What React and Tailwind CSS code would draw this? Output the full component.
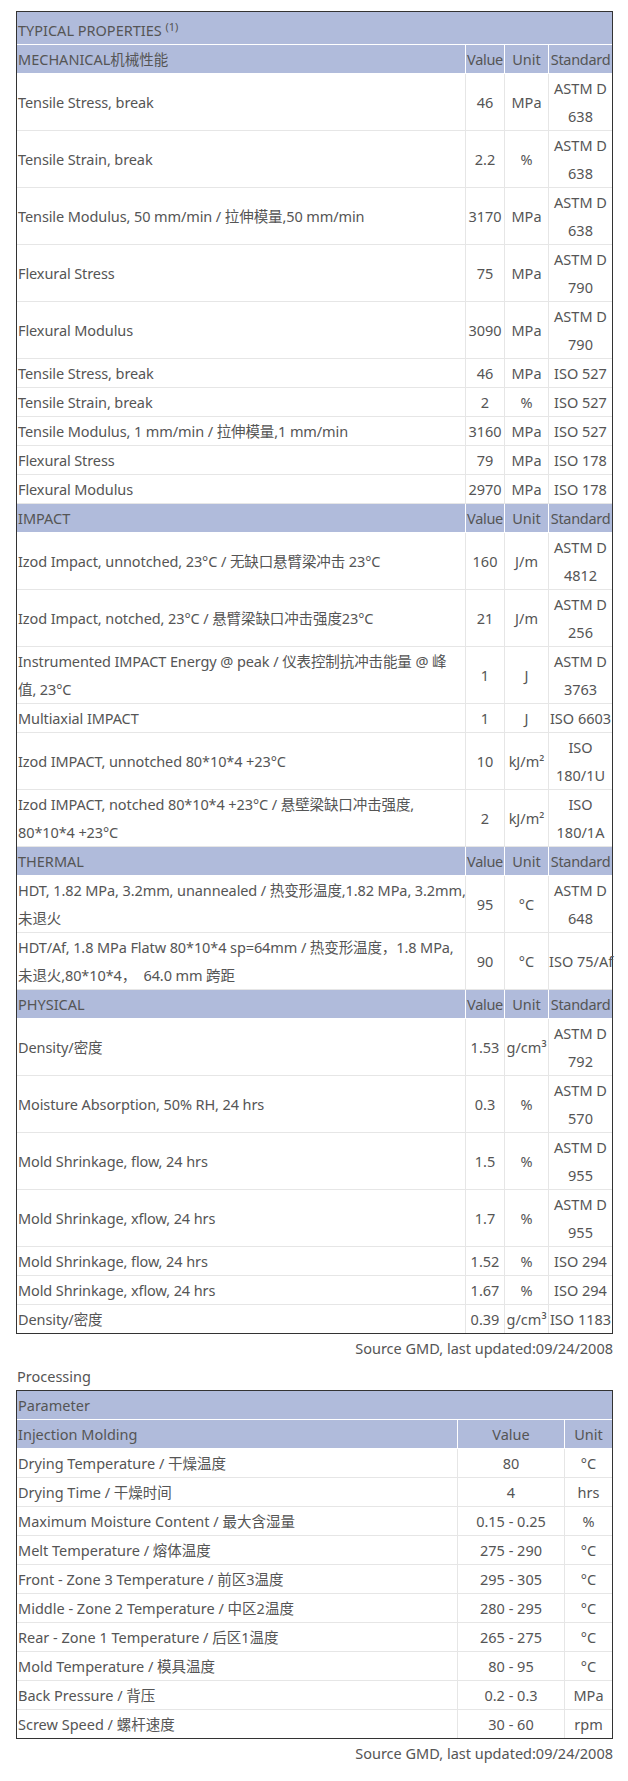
import React from "react";

const FONT = {
    fontFamily: '"Noto Sans", "Noto Sans CJK SC", sans-serif',
};

// [property lines, value, unit, standard lines]
const secciones = [
    {
        titulo: "MECHANICAL机械性能",
        filas: [
            [["Tensile Stress, break"], "46", "MPa", ["ASTM D", "638"]],
            [["Tensile Strain, break"], "2.2", "%", ["ASTM D", "638"]],
            [["Tensile Modulus, 50 mm/min / 拉伸模量,50 mm/min"], "3170", "MPa", ["ASTM D", "638"]],
            [["Flexural Stress"], "75", "MPa", ["ASTM D", "790"]],
            [["Flexural Modulus"], "3090", "MPa", ["ASTM D", "790"]],
            [["Tensile Stress, break"], "46", "MPa", ["ISO 527"]],
            [["Tensile Strain, break"], "2", "%", ["ISO 527"]],
            [["Tensile Modulus, 1 mm/min / 拉伸模量,1 mm/min"], "3160", "MPa", ["ISO 527"]],
            [["Flexural Stress"], "79", "MPa", ["ISO 178"]],
            [["Flexural Modulus"], "2970", "MPa", ["ISO 178"]],
        ],
    },
    {
        titulo: "IMPACT",
        filas: [
            [["Izod Impact, unnotched, 23°C / 无缺口悬臂梁冲击 23°C"], "160", "J/m", ["ASTM D", "4812"]],
            [["Izod Impact, notched, 23°C / 悬臂梁缺口冲击强度23°C"], "21", "J/m", ["ASTM D", "256"]],
            [["Instrumented IMPACT Energy @ peak / 仪表控制抗冲击能量 @ 峰", "值, 23°C"], "1", "J", ["ASTM D", "3763"]],
            [["Multiaxial IMPACT"], "1", "J", ["ISO 6603"]],
            [["Izod IMPACT, unnotched 80*10*4 +23°C"], "10", "kJ/m²", ["ISO", "180/1U"]],
            [["Izod IMPACT, notched 80*10*4 +23°C / 悬壁梁缺口冲击强度,", "80*10*4 +23°C"], "2", "kJ/m²", ["ISO", "180/1A"]],
        ],
    },
    {
        titulo: "THERMAL",
        filas: [
            [["HDT, 1.82 MPa, 3.2mm, unannealed / 热变形温度,1.82 MPa, 3.2mm,", "未退火"], "95", "°C", ["ASTM D", "648"]],
            [["HDT/Af, 1.8 MPa Flatw 80*10*4 sp=64mm / 热变形温度，1.8 MPa,", "未退火,80*10*4，  64.0 mm 跨距"], "90", "°C", ["ISO 75/Af"]],
        ],
    },
    {
        titulo: "PHYSICAL",
        filas: [
            [["Density/密度"], "1.53", "g/cm³", ["ASTM D", "792"]],
            [["Moisture Absorption, 50% RH, 24 hrs"], "0.3", "%", ["ASTM D", "570"]],
            [["Mold Shrinkage, flow, 24 hrs"], "1.5", "%", ["ASTM D", "955"]],
            [["Mold Shrinkage, xflow, 24 hrs"], "1.7", "%", ["ASTM D", "955"]],
            [["Mold Shrinkage, flow, 24 hrs"], "1.52", "%", ["ISO 294"]],
            [["Mold Shrinkage, xflow, 24 hrs"], "1.67", "%", ["ISO 294"]],
            [["Density/密度"], "0.39", "g/cm³", ["ISO 1183"]],
        ],
    },
];

const procesado = [
    ["Drying Temperature / 干燥温度", "80", "°C"],
    ["Drying Time / 干燥时间", "4", "hrs"],
    ["Maximum Moisture Content / 最大含湿量", "0.15 - 0.25", "%"],
    ["Melt Temperature / 熔体温度", "275 - 290", "°C"],
    ["Front - Zone 3 Temperature / 前区3温度", "295 - 305", "°C"],
    ["Middle - Zone 2 Temperature / 中区2温度", "280 - 295", "°C"],
    ["Rear - Zone 1 Temperature / 后区1温度", "265 - 275", "°C"],
    ["Mold Temperature / 模具温度", "80 - 95", "°C"],
    ["Back Pressure / 背压", "0.2 - 0.3", "MPa"],
    ["Screw Speed / 螺杆速度", "30 - 60", "rpm"],
];

const Lineas = ({ lineas }) =>
    lineas.map((l, i) => (
        <div key={i} className="whitespace-pre">
            {l}
        </div>
    ));

const App = () => {
    const total = secciones.reduce((n, s) => n + s.filas.length, 0);
    let idx = 0;

    return (
        <div style={FONT} className="bg-white min-h-screen pt-[11px] pl-4 pr-[15px] text-[14.5px] leading-[28px] text-[#555]">
            <div className="border border-[#333]">
                <div className="bg-[#b0bbdb] border-b border-white pl-px pt-[4px]">
                    TYPICAL PROPERTIES <sup className="text-[11px]">(1)</sup>
                </div>
                {secciones.map((sec) => (
                    <div key={sec.titulo}>
                        <div className="grid grid-cols-[448px_39px_44px_64px] bg-[#b0bbdb] border-b border-white">
                            <div className="pl-px whitespace-nowrap">{sec.titulo}</div>
                            <div className="border-l border-white text-center whitespace-nowrap tracking-[-0.3px]">Value</div>
                            <div className="border-l border-white text-center">Unit</div>
                            <div className="border-l border-white text-center whitespace-nowrap tracking-[-0.3px]">Standard</div>
                        </div>
                        {sec.filas.map(([prop, val, unit, std], i) => {
                            idx++;
                            const ultima = idx === total;
                            return (
                                <div
                                    key={i}
                                    className={
                                        "grid grid-cols-[448px_39px_44px_64px] " +
                                        (ultima ? "" : "border-b border-[#e6e6e6]")
                                    }
                                >
                                    <div className="pl-px flex flex-col justify-center tracking-[-0.1px]">
                                        <Lineas lineas={prop} />
                                    </div>
                                    <div className="border-l border-[#e6e6e6] flex items-center justify-center">{val}</div>
                                    <div className="border-l border-[#e6e6e6] flex items-center justify-center whitespace-nowrap">{unit}</div>
                                    <div className="border-l border-[#e6e6e6] flex flex-col justify-center text-center">
                                        <Lineas lineas={std} />
                                    </div>
                                </div>
                            );
                        })}
                    </div>
                ))}
            </div>
            <div className="text-right">Source GMD, last updated:09/24/2008</div>
            <div className="pl-px">Processing</div>
            <div className="border border-[#333]">
                <div className="bg-[#b0bbdb] border-b border-white pl-px">Parameter</div>
                <div className="grid grid-cols-[440px_107px_48px] bg-[#b0bbdb] border-b border-white">
                    <div className="pl-px">Injection Molding</div>
                    <div className="border-l border-white text-center">Value</div>
                    <div className="border-l border-white text-center">Unit</div>
                </div>
                {procesado.map(([p, v, u], i) => (
                    <div
                        key={i}
                        className={
                            "grid grid-cols-[440px_107px_48px] " +
                            (i === procesado.length - 1 ? "" : "border-b border-[#e6e6e6]")
                        }
                    >
                        <div className="pl-px whitespace-nowrap">{p}</div>
                        <div className="border-l border-[#e6e6e6] text-center">{v}</div>
                        <div className="border-l border-[#e6e6e6] text-center">{u}</div>
                    </div>
                ))}
            </div>
            <div className="text-right">Source GMD, last updated:09/24/2008</div>
        </div>
    );
};

export default App;
